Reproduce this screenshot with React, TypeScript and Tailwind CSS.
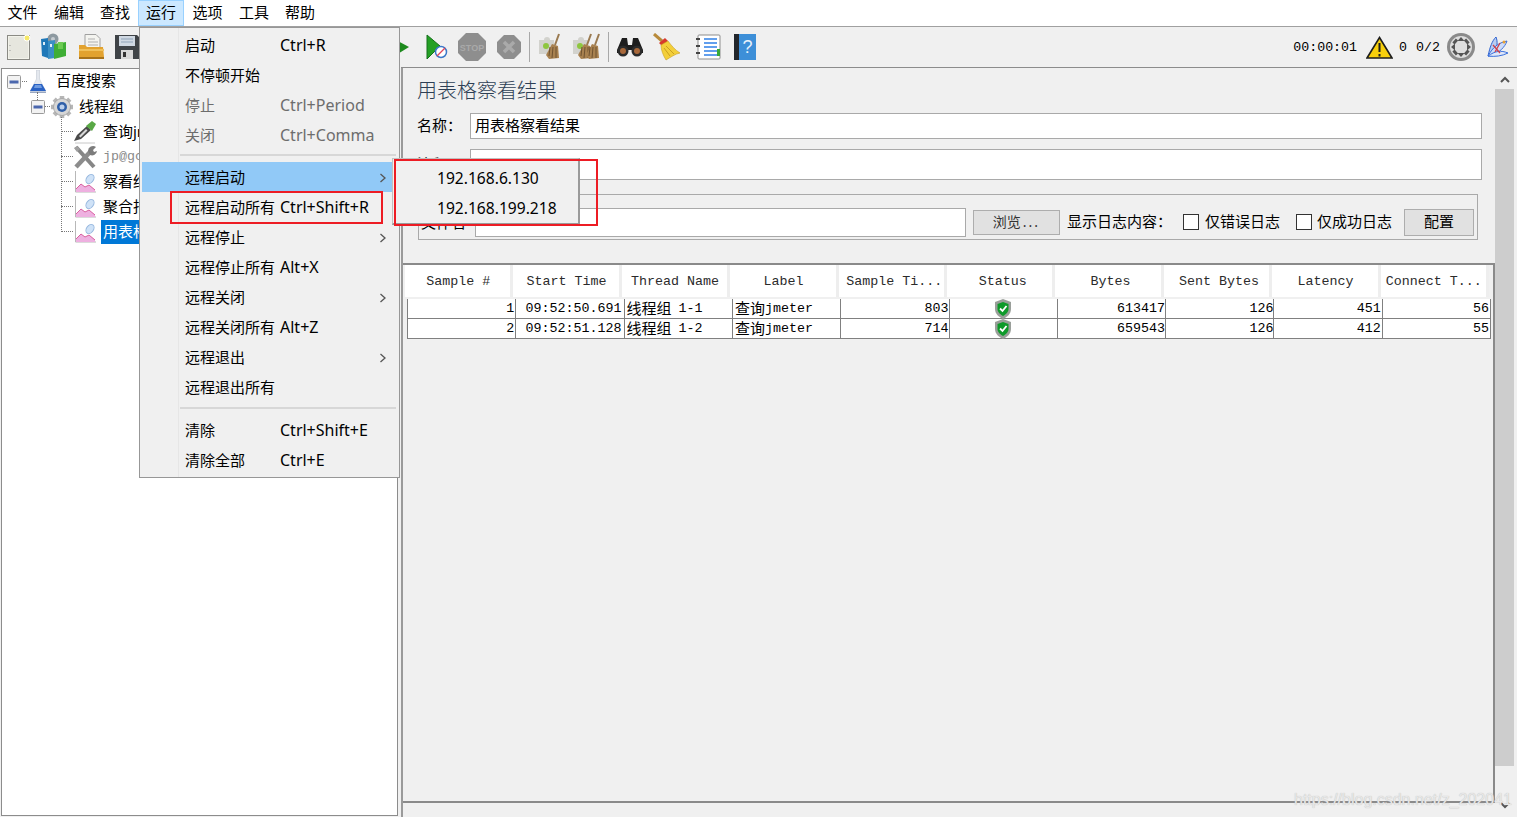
import React from "react";

const UI = "font-['Noto_Sans','Noto_Sans_CJK_SC',sans-serif]";
const MONO = "font-['Liberation_Mono','Noto_Sans_CJK_SC',monospace]";

const New = () => (
  <svg width="24" height="26" viewBox="0 0 24 26" className="shrink-0">
    <rect x="0.5" y="1.5" width="22" height="24" fill="#f2f2ea" stroke="#8a8a84" />
    <rect x="2" y="3" width="19" height="21" fill="#e6e6de" />
    <path d="M3 11v1M3 16v1" stroke="#999" />
    <circle cx="20" cy="4" r="3" fill="#f6e96a" stroke="#fff" />
  </svg>
);
const Templates = () => (
  <svg width="28" height="28" viewBox="0 0 28 28" className="shrink-0">
    <circle cx="13" cy="6" r="5.5" fill="#8d99a0" />
    <circle cx="13" cy="6" r="2" fill="#c5ccd0" />
    <path d="M1 6l7-1v20l-6-2z" fill="#1f78b8" />
    <path d="M8 8l7-1v18l-7 1z" fill="#3a8fc4" />
    <path d="M14 11l12-2v14l-12 3z" fill="#3fae35" />
    <path d="M18 9h5v7h-5z" fill="#6ccb52" />
    <path d="M4 9v3M11 11v3" stroke="#dfeef7" strokeWidth="2" />
  </svg>
);
const OpenIcon = () => (
  <svg width="27" height="26" viewBox="0 0 27 26" className="shrink-0">
    <path d="M7 0.500h11l4 4V15H7z" fill="#f4f4f0" stroke="#a0a0a0" />
    <path d="M10 5h7M10 8h10M10 11h10" stroke="#b0b0b0" />
    <path d="M1 11h6l2 2h16l1 10a2 2 0 0 1-2 2H3a2 2 0 0 1-2-2z" fill="#e2a22f" />
    <path d="M1 15h25v2H1z" fill="#f0c05a" />
    <path d="M1 23h25v2H1z" fill="#a8721a" />
  </svg>
);
const Save = () => (
  <svg width="24" height="26" viewBox="0 0 24 26" className="shrink-0">
    <path d="M0 1h22l2 2v22H0z" fill="#3f4347" />
    <rect x="4" y="2" width="16" height="10" fill="#cfd8e2" />
    <path d="M6 5h12M6 8h12" stroke="#8fa3b8" />
    <rect x="6" y="16" width="12" height="9" fill="#d8d8d8" />
    <rect x="8" y="18" width="3" height="5" fill="#333" />
  </svg>
);
const Play = () => (
  <svg width="24" height="24" viewBox="0 0 24 24" className="shrink-0">
    <path d="M10 5l13 7-13 8z" fill="#1d8a1d" />
  </svg>
);
const PlayNoPause = () => (
  <svg width="22" height="26" viewBox="0 0 22 26" className="shrink-0">
    <path d="M1 1l13 11L1 25z" fill="#24a024" stroke="#14701a" />
    <circle cx="15" cy="18" r="5.500" fill="#fff" stroke="#3b77c8" strokeWidth="1.500" />
    <path d="M11 22l8-8" stroke="#e0455a" strokeWidth="1.300" />
  </svg>
);
const Stop = () => (
  <svg width="28" height="28" viewBox="0 0 28 28" className="shrink-0">
    <path d="M8 0h12l8 8v12l-8 8H8l-8-8V8z" fill="#8e8e8e" />
    <text x="14" y="18" textAnchor="middle" fontSize="9" fontWeight="700" fill="#a9a9a9" fontFamily="Liberation Sans">STOP</text>
  </svg>
);
const Shutdown = () => (
  <svg width="24" height="24" viewBox="0 0 24 24" className="shrink-0">
    <path d="M7 0h10l7 7v10l-7 7H7l-7-7V7z" fill="#8e8e8e" />
    <path d="M7 7l10 10M17 7L7 17" stroke="#aaa" strokeWidth="3.500" />
  </svg>
);
const Broom = ({ x }: { x: number }) => (
  <g transform={`translate(${x} 0)`}>
    <path d="M19 1l-4 11" stroke="#9a7a50" strokeWidth="2" />
    <path d="M12 11l6 2 1 12-10 1-3-4z" fill="#a8814f" />
    <path d="M10 14l-1 9M13 14l-1 11M16 14l0 11" stroke="#6f5230" />
  </g>
);
const Clear = () => (
  <svg width="24" height="28" viewBox="0 0 24 28" className="shrink-0">
    <path d="M2 7h5a3 3 0 0 1 6 0h4v14H2z" fill="#d2d2cd" />
    <circle cx="9" cy="13" r="3" fill="#8ec63f" />
    <Broom x={3} />
  </svg>
);
const ClearAll = () => (
  <svg width="28" height="28" viewBox="0 0 28 28" className="shrink-0">
    <path d="M1 7h5a3 3 0 0 1 6 0h4v14H1z" fill="#d2d2cd" />
    <circle cx="8" cy="13" r="3" fill="#8ec63f" />
    <Broom x={0} />
    <Broom x={8} />
  </svg>
);
const Binoculars = () => (
  <svg width="28" height="20" viewBox="0 0 28 20" className="shrink-0">
    <path d="M6 1h5l1 7h4l1-7h5l5 12v3H19l-2-3h-6l-2 3H1v-3z" fill="#1d1d1d" />
    <circle cx="7" cy="14" r="5.500" fill="#2b2b2b" />
    <circle cx="21" cy="14" r="5.500" fill="#2b2b2b" />
    <circle cx="7" cy="14" r="3" fill="#a8683a" />
    <circle cx="21" cy="14" r="3" fill="#a8683a" />
  </svg>
);
const BroomY = () => (
  <svg width="28" height="28" viewBox="0 0 28 28" className="shrink-0">
    <path d="M2 1l8 7" stroke="#b88a3a" strokeWidth="3" />
    <path d="M7 10l6-5 3 3-6 5z" fill="#d8382c" />
    <path d="M9 12L16 8C19 12 23 17 28 20C23 21 19 24 14 27C11 22 9 17 9 12z" fill="#f3cf3a" stroke="#c9a020" strokeWidth="0.600" />
    <path d="M14 13l8 8M12 15l6 8" stroke="#c9a020" />
  </svg>
);
const ListIcon = () => (
  <svg width="26" height="26" viewBox="0 0 26 26" className="shrink-0">
    <rect x="3" y="1" width="22" height="24" rx="1" fill="#fff" stroke="#8d8d8d" />
    <path d="M9 5h13M9 9h13M9 13h13M9 17h13M9 21h13" stroke="#2f80e8" strokeWidth="1.600" />
    <path d="M1 5h4M1 12h4M1 19h4" stroke="#444" strokeWidth="2" />
    <rect x="22" y="15" width="3" height="7" fill="#37a837" />
  </svg>
);
const Help = () => (
  <svg width="22" height="28" viewBox="0 0 22 28" className="shrink-0">
    <rect x="0" y="1" width="22" height="26" fill="#3d8fd8" />
    <rect x="0" y="1" width="5" height="26" fill="#22262b" />
    <text x="13.500" y="20" textAnchor="middle" fontSize="18" fill="#e8f2fb" fontFamily="Liberation Sans">?</text>
  </svg>
);
const Warn = () => (
  <svg width="27" height="23" viewBox="0 0 27 23" className="shrink-0">
    <path d="M13.500 1.500L26 22H1z" fill="#f7cf0c" stroke="#1d1d1d" strokeWidth="1.600" />
    <path d="M13.500 7v9M13.500 18v2.500" stroke="#1d1d1d" strokeWidth="2" />
  </svg>
);
const Zoom = () => (
  <svg width="28" height="28" viewBox="0 0 28 28" className="shrink-0">
    <circle cx="14" cy="14" r="14" fill="#8a8a8a" />
    <circle cx="14" cy="14" r="11" fill="#dedede" />
    <path d="M14 4l3.500 4h-7zM14 24l3.500-4h-7zM4 14l4-3.500v7zM24 14l-4-3.500v7z" fill="#555" />
    <path d="M6.500 10.500l3.500-4M21.500 10.500l-3.500-4M6.500 17.500l3.500 4M21.500 17.500l-3.500 4" stroke="#555" strokeWidth="3" />
  </svg>
);
const Fancy = () => (
  <svg width="24" height="24" viewBox="0 0 24 24" className="shrink-0">
    <path d="M3 21C5 12 7 6 11 2c2 5 1 10-1 17z" fill="#b9cdf2" stroke="#2e62d0" />
    <path d="M3 21c5-9 10-13 19-15-2 6-8 12-16 15z" fill="#cfdcf7" stroke="#3a70dc" />
    <path d="M3 21c7-5 13-6 20-3-6 3-13 4-20 3z" fill="#dfe7f9" stroke="#3a70dc" />
    <path d="M8 10l7 8M15 8l-5 9" stroke="#d0404a" strokeWidth="1.300" />
    <circle cx="19" cy="7" r="1.500" fill="#e8a030" />
  </svg>
);

const Toggle = () => (
  <svg width="14" height="14" viewBox="0 0 14 14" className="shrink-0">
    <rect x="0.500" y="0.500" width="13" height="13" rx="1" fill="#f2f2f2" stroke="#9a9a9a" />
    <rect x="2.500" y="5.500" width="9" height="3" fill="#4b67ad" />
  </svg>
);
const Flask = () => (
  <svg width="20" height="24" viewBox="0 0 20 24" className="shrink-0">
    <path d="M8.500 0h3v9l6 12H2.500l6-12z" fill="#e4e8ee" stroke="#c3c9d3" strokeWidth="0.600" />
    <path d="M6 14h8l4 7H2z" fill="#2a62c4" />
    <path d="M7 15h6l1 3H6z" fill="#6f9be0" />
    <path d="M2 21.500h16v1.500H2z" fill="#9aa8c2" />
  </svg>
);
const Gear = () => (
  <svg width="24" height="24" viewBox="0 0 24 24" className="shrink-0">
    <g stroke="#b6b6b6" strokeWidth="4.500">
      <path d="M12 1v22M1 12h22M4.200 4.200l15.600 15.600M19.800 4.200L4.200 19.800" />
    </g>
    <circle cx="12" cy="12" r="8.500" fill="#d6d6d6" stroke="#a8a8a8" />
    <circle cx="12" cy="12" r="5" fill="#2f5fa8" />
    <circle cx="12" cy="12" r="2.500" fill="#bcd0ec" />
  </svg>
);
const Dropper = () => (
  <svg width="24" height="24" viewBox="0 0 24 24" className="shrink-0">
    <path d="M2 23h20" stroke="#c8c8c8" />
    <path d="M1 21l3-6L14 6l4 4-10 9z" fill="#4a4a4a" />
    <path d="M6 16l7-7 1.500 1.500-7 7z" fill="#d9d9d9" />
    <path d="M13 6l6-5 4 3-4 7z" fill="#59a845" />
  </svg>
);
const Tools = () => (
  <svg width="24" height="24" viewBox="0 0 24 24" className="shrink-0">
    <path d="M3 2l18 20" stroke="#868686" strokeWidth="4" />
    <path d="M3 22L18 6" stroke="#8c8c8c" strokeWidth="4.500" />
    <path d="M15 6a5 5 0 0 1 8-4l-3 3 1 2 3-1a5 5 0 0 1-7 4z" fill="#7c7c7c" />
    <path d="M1 3l3-2 3 3-3 3z" fill="#a0a0a0" />
  </svg>
);
const Chart = () => (
  <svg width="22" height="24" viewBox="0 0 22 24" className="shrink-0">
    <path d="M1.500 1v21H22" stroke="#b8b8b8" fill="none" />
    <path d="M2 22v-3l5-5 4 3 4-2 6 5v2z" fill="#eeb0e0" />
    <path d="M2 19l5-5 4 3 4-2 6 5" stroke="#d8609f" fill="none" />
    <ellipse cx="16" cy="9" rx="3.500" ry="5" transform="rotate(35 16 9)" fill="#cfe2f7" stroke="#94b6de" />
  </svg>
);
const Shield = () => (
  <svg width="18" height="20" viewBox="0 0 18 20" className="shrink-0">
    <path d="M9 0l8 3v7c0 5-4 8-8 10-4-2-8-5-8-10V3z" fill="#9a9f9a" />
    <path d="M9 3l5.500 2v5c0 3.500-3 5.500-5.500 7-2.500-1.500-5.500-3.500-5.500-7V5z" fill="#0e9a2a" />
    <path d="M6 9.500l2.500 2.500L12.500 7" stroke="#fff" strokeWidth="1.800" fill="none" />
  </svg>
);

const Sep = ({ className }: { className: string }) => (
  <div className={`w-px h-[30px] bg-[#a8a8a8] shrink-0 ${className}`} />
);

const menuBar = [
  { t: "文件", w: "w-[47px]" },
  { t: "编辑", w: "w-[46px]" },
  { t: "查找", w: "w-[46px]" },
  { t: "运行", w: "w-[46px]", on: true },
  { t: "选项", w: "w-[47px]" },
  { t: "工具", w: "w-[46px]" },
  { t: "帮助", w: "w-[46px]" },
];

const TreeRow = ({
  icon,
  children,
  selected,
  gray,
}: {
  icon: React.ReactNode;
  children: string;
  selected?: boolean;
  gray?: boolean;
}) => (
  <div className="h-[25px] flex items-center pl-[59px] whitespace-nowrap">
    <div className="w-[12px] border-t border-dotted border-[#777] shrink-0" />
    <div className="w-[24px] flex justify-center shrink-0">{icon}</div>
    <div
      className={`ml-[4px] h-[24px] px-[2px] flex items-center ${selected ? "bg-[#0078d7] text-white" : gray ? `text-[#8a8a8a] text-[13.33px] ${MONO}` : "text-black"}`}
    >
      {children}
    </div>
  </div>
);

type MI = { l: string; s?: string; dis?: boolean; sub?: boolean; on?: boolean };
const MenuItem = ({ l, s, dis, sub, on }: MI) => (
  <div
    className={`h-[30px] flex items-center pl-[43px] relative ${on ? "bg-[#91c9f7]" : ""} ${dis ? "text-[#6d6d6d]" : "text-black"}`}
  >
    <span className="w-[95px] whitespace-nowrap shrink-0">{l}</span>
    {s && <span className="whitespace-nowrap text-[16px]">{s}</span>}
    {sub && (
      <svg width="8" height="10" viewBox="0 0 8 10" className="absolute right-[9px] top-[11px]">
        <path d="M1.500 1l4.500 4-4.500 4" stroke="#555" strokeWidth="1.300" fill="none" />
      </svg>
    )}
  </div>
);

const Divider = ({ className }: { className: string }) => (
  <div className={`ml-[38px] h-[2px] bg-[#d7d7d7] ${className}`} />
);

const headers = [
  { t: "Sample #", c: "pl-[1px]" },
  { t: "Start Time", c: "pl-[1px]" },
  { t: "Thread Name", c: "pl-[1px]" },
  { t: "Label", c: "pl-[1px]" },
  { t: "Sample Ti...", c: "pl-[6px]" },
  { t: "Status", c: "pl-[6px]" },
  { t: "Bytes", c: "pl-[5px]" },
  { t: "Sent Bytes", c: "pl-[5px]" },
  { t: "Latency", c: "pl-[1px]" },
  { t: "Connect T...", c: "pl-[1px]" },
];
const rows = [
  { n: "1", time: "09:52:50.691", th: "1-1", st: "803", by: "613417", sent: "126", lat: "451", con: "56" },
  { n: "2", time: "09:52:51.128", th: "1-2", st: "714", by: "659543", sent: "126", lat: "412", con: "55" },
];
const cell = "h-[19px] border-r border-[#808080] whitespace-nowrap flex items-center leading-[18px]";
const cjk = "text-[15px] leading-[18px] font-['Noto_Sans_CJK_SC',sans-serif] pb-[1px]";

export default function App() {
  return (
    <div className={`${UI} relative w-[1517px] h-[817px] overflow-hidden bg-[#f0f0f0] text-[15px] text-black flex flex-col`}>
      {/* menu bar */}
      <div className="h-[27px] bg-white border-b border-[#a0a0a0] flex shrink-0 -ml-px">
        {menuBar.map((m) => (
          <div
            key={m.t}
            className={`${m.w} h-[26px] pb-[2px] flex items-center justify-center ${m.on ? "bg-[#cce8ff] border border-[#99d1ff]" : ""}`}
          >
            {m.t}
          </div>
        ))}
      </div>

      {/* toolbar */}
      <div className="h-[40px] flex items-center pl-[7px] shrink-0">
        <New />
        <div className="ml-[9px]"><Templates /></div>
        <div className="ml-[10px]"><OpenIcon /></div>
        <div className="ml-[10px]"><Save /></div>
        <div className="ml-[247px]"><Play /></div>
        <div className="ml-[16px]"><PlayNoPause /></div>
        <div className="ml-[10px]"><Stop /></div>
        <div className="ml-[11px]"><Shutdown /></div>
        <Sep className="ml-[8px]" />
        <div className="ml-[7px]"><Clear /></div>
        <div className="ml-[11px]"><ClearAll /></div>
        <Sep className="ml-[8px]" />
        <div className="ml-[7px]"><Binoculars /></div>
        <div className="ml-[8px]"><BroomY /></div>
        <div className="ml-[15px]"><ListIcon /></div>
        <div className="ml-[13px]"><Help /></div>
        <div className="flex-1" />
        <span className={`${MONO} text-[13.3px] mt-[2px]`}>00:00:01</span>
        <div className="ml-[9px]"><Warn /></div>
        <span className={`${MONO} text-[13.3px] ml-[6px] mt-[2px]`}>0</span>
        <span className={`${MONO} text-[13.3px] ml-[9px] mt-[2px]`}>0/2</span>
        <div className="ml-[7px]"><Zoom /></div>
        <div className="ml-[10px] mr-[8px]"><Fancy /></div>
      </div>

      {/* body */}
      <div className="flex-1 flex min-h-0">
        {/* tree */}
        <div className="w-[397px] ml-px mt-px mb-px shrink-0 bg-white border border-[#8c8c8c] overflow-hidden relative">
          <div className="h-[25px] flex items-center pl-[5px] whitespace-nowrap">
            <Toggle />
            <div className="w-[5px] border-t border-dotted border-[#777] ml-px" />
            <div className="w-[20px] ml-[1px] flex justify-center"><Flask /></div>
            <span className="ml-[8px] pb-[2px]">百度搜索</span>
          </div>
          <div className="h-[25px] flex items-center pl-[29px] whitespace-nowrap">
            <Toggle />
            <div className="w-[5px] border-t border-dotted border-[#777]" />
            <Gear />
            <span className="ml-[5px] pb-[1px]">线程组</span>
          </div>
          <TreeRow icon={<Dropper />}>查询jmeter</TreeRow>
          <TreeRow icon={<Tools />} gray>jp@gc - Stepping Thread Group</TreeRow>
          <TreeRow icon={<Chart />}>察看结果树</TreeRow>
          <TreeRow icon={<Chart />}>聚合报告</TreeRow>
          <TreeRow icon={<Chart />} selected>用表格察看结果</TreeRow>
          <div className="absolute left-[59px] top-[48px] h-[115px] border-l border-dotted border-[#777]" />
          <div className="absolute left-[35px] top-[23px] h-[8px] border-l border-dotted border-[#777]" />
        </div>

        {/* right */}
        <div className="ml-[3px] flex-1 flex min-w-0 border-t border-[#8c8c8c]">
          <div className="w-[1094px] border-l-2 border-[#9a9a9a] shrink-0 flex flex-col">
            <div className="h-[45px] pl-[14px] flex items-center pt-[1px] text-[20px] text-[#2d3f55] font-light">
              用表格察看结果
            </div>
            <div className="h-[26px] flex pl-[14px]">
              <span className="w-[53px] flex items-center pb-[2px]">名称：</span>
              <div className="w-[1012px] bg-white border border-[#a9a9a9] flex items-center px-[4px] pb-[2px]">用表格察看结果</div>
            </div>
            <div className="h-[31px] mt-[10px] flex pl-[14px]">
              <span className="w-[53px] flex items-center">注释：</span>
              <div className="w-[1012px] bg-white border border-[#a9a9a9]" />
            </div>
            <div className="w-[1060px] h-[46px] ml-[15px] mt-[14px] border border-[#a9a9a9] pt-[10px] flex items-center">
              <span className="w-[56px] pl-[2px] whitespace-nowrap">文件名</span>
              <div className="w-[491px] h-[29px] bg-white border border-[#a9a9a9]" />
              <div className="ml-[7px] w-[87px] h-[25px] bg-[#e1e1e1] border border-[#adadad] flex items-center justify-center text-[14px] text-[#333] pb-[2px]">
                浏览<span className="tracking-[2px] ml-[2px]">...</span>
              </div>
              <span className="ml-[7px] w-[116px] whitespace-nowrap pb-[2px]">显示日志内容：</span>
              <div className="w-[16px] h-[16px] bg-white border border-[#333]" />
              <span className="ml-[6px] w-[85px] whitespace-nowrap pb-[2px]">仅错误日志</span>
              <div className="ml-[6px] w-[16px] h-[16px] bg-white border border-[#333]" />
              <span className="ml-[5px] w-[75px] whitespace-nowrap pb-[2px]">仅成功日志</span>
              <div className="ml-[12px] w-[70px] h-[27px] bg-[#e1e1e1] border border-[#adadad] flex items-center justify-center pb-[1px]">配置</div>
            </div>
            {/* table */}
            <div className={`${MONO} text-[13.33px] mt-[23px] h-[540px] border-t-2 border-b-2 border-r-2 border-[#8a8a8a] w-[1092px] pl-[1px]`}>
              <div className="grid grid-cols-10 w-[1084px] h-[32px] ml-[1px] bg-white">
                {headers.map((h) => (
                  <div key={h.t} className={`border-r-[3px] border-[#eeeeee] pt-[2px] ${h.c} flex items-center justify-center whitespace-nowrap text-[#2b2b2b]`}>{h.t}</div>
                ))}
              </div>
              <div className="mt-[2px] ml-[3px] w-[1084px] border-l border-[#808080]">
                {rows.map((r) => (
                  <div key={r.n} className="grid grid-cols-10 h-[20px] bg-white border-b border-[#808080]">
                    <div className={`${cell} justify-end pr-[1px]`}>{r.n}</div>
                    <div className={`${cell} justify-end pr-[2px]`}>{r.time}</div>
                    <div className={`${cell} pl-[2px]`}><span className={cjk}>线程组</span><span className="ml-[7px]">{r.th}</span></div>
                    <div className={`${cell} pl-[2px]`}><span className={cjk}>查询</span>jmeter</div>
                    <div className={`${cell} justify-end`}>{r.st}</div>
                    <div className={`${cell} justify-center`}><Shield /></div>
                    <div className={`${cell} justify-end`}>{r.by}</div>
                    <div className={`${cell} justify-end`}>{r.sent}</div>
                    <div className={`${cell} justify-end pr-[1px]`}>{r.lat}</div>
                    <div className={`${cell} justify-end pr-[1px]`}>{r.con}</div>
                  </div>
                ))}
              </div>
            </div>
          </div>
          {/* scrollbar */}
          <div className="w-[19px] flex flex-col shrink-0 bg-[#f0f0f0]">
            <div className="h-[21px] pt-[2px] flex items-center justify-center">
              <svg width="10" height="7" viewBox="0 0 10 7"><path d="M1 6l4-4 4 4" stroke="#555" strokeWidth="2" fill="none" /></svg>
            </div>
            <div className="h-[677px] bg-[#cdcdcd]" />
            <div className="flex-1 flex items-center justify-center pt-[28px]">
              <svg width="10" height="7" viewBox="0 0 10 7"><path d="M1 1l4 4 4-4" stroke="#555" strokeWidth="2" fill="none" /></svg>
            </div>
          </div>
        </div>
      </div>

      {/* run menu */}
      <div className="absolute left-[139px] top-[27px] w-[261px] h-[451px] bg-[#f0f0f0] border border-[#979797] pl-[2px] pr-[3px] pt-[2px]">
        <div className="absolute left-[38px] top-0 bottom-0 w-px bg-[#e6e6e6]" />
        <MenuItem l="启动" s="Ctrl+R" />
        <MenuItem l="不停顿开始" />
        <MenuItem l="停止" s="Ctrl+Period" dis />
        <MenuItem l="关闭" s="Ctrl+Comma" dis />
        <Divider className="mt-[4px] mb-[6px]" />
        <MenuItem l="远程启动" sub on />
        <MenuItem l="远程启动所有" s="Ctrl+Shift+R" />
        <MenuItem l="远程停止" sub />
        <MenuItem l="远程停止所有" s="Alt+X" />
        <MenuItem l="远程关闭" sub />
        <MenuItem l="远程关闭所有" s="Alt+Z" />
        <MenuItem l="远程退出" sub />
        <MenuItem l="远程退出所有" />
        <Divider className="mt-[5px] mb-[6px]" />
        <MenuItem l="清除" s="Ctrl+Shift+E" />
        <MenuItem l="清除全部" s="Ctrl+E" />
      </div>

      {/* submenu */}
      <div className="absolute left-[392px] top-[158px] w-[188px] h-[67px] bg-[#f0f0f0] border border-[#c0c0c0] border-r-2 border-r-[#9a9a9a] border-b-2 border-b-[#9a9a9a] pt-[5px] pl-[44px] text-[15.6px]">
        <div className="h-[30px] flex items-center">192.168.6.130</div>
        <div className="h-[30px] flex items-center">192.168.199.218</div>
      </div>

      {/* annotations */}
      <div className="absolute left-[170px] top-[191px] w-[213px] h-[33px] border-2 border-[#ed1c24]" />
      <div className="absolute left-[394px] top-[159px] w-[204px] h-[67px] border-2 border-[#ed1c24]" />

      {/* watermark */}
      <div className="absolute left-[1294px] top-[788px] text-[16px] font-['Liberation_Sans',sans-serif] text-[#e8e8e8] [text-shadow:0_0_1px_#b5b5b5] whitespace-nowrap">
        https://blog.csdn.net/z_202041
      </div>
    </div>
  );
}
